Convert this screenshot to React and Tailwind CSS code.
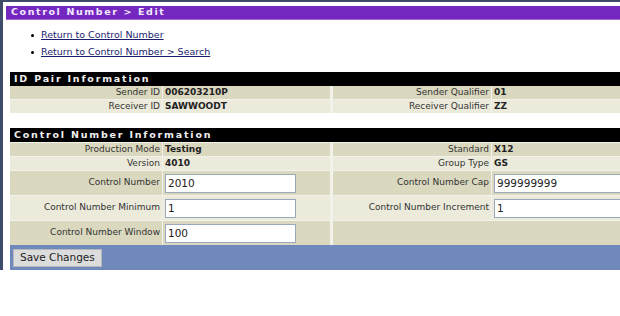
import React from "react";

const font = { fontFamily: '"DejaVu Sans", Verdana, sans-serif' };

function Row({ h, children }) {
  return <div className={`flex gap-[1px] ${h}`}>{children}</div>;
}

function Label({ dark, w, children }) {
  return (
    <div className={`${w} shrink-0 flex items-center justify-end pr-[2px] text-[9px] text-[#333] ${dark ? "bg-[#dad8bf]" : "bg-[#ebeadb]"}`}>
      {children}
    </div>
  );
}

function Value({ dark, w, children }) {
  return (
    <div className={`${w} shrink-0 flex items-center pl-[2px] text-[9px] font-bold text-[#222] ${dark ? "bg-[#dad8bf]" : "bg-[#ebeadb]"}`}>
      {children}
    </div>
  );
}

function Input({ value }) {
  return (
    <input
      readOnly
      value={value}
      className="w-[131px] h-[19px] border border-[#9aa8bb] bg-white px-[2px] text-[10.5px] font-normal text-[#222] outline-none"
      style={font}
    />
  );
}

function Sep() {
  return <div className="w-[1px] shrink-0 bg-[#f3f2ea]" />;
}

export default function App() {
  return (
    <div className="w-[620px] h-[316px] overflow-hidden bg-white" style={font}>
      <div className="flex h-[270px]">
        <div className="w-[3px] bg-[#3e4b6a] shrink-0" />
        <div className="flex-1 flex flex-col">
          <div className="h-[2px] bg-[#3e4b6a]" />
          <div className="pl-[3px] pt-[4px]">
            <div className="h-[14px] bg-[#7428c0] border-b border-[#9a6ad0] flex items-center pl-[5px] text-[9.5px] font-bold tracking-[1.6px] text-[#f4e8ff]">
              Control Number &gt; Edit
            </div>
          </div>
          <ul className="pl-[28px] pt-[9px] text-[9.5px] text-[#1c1c70]">
            <li className="flex items-center h-[13px]">
              <span className="w-[3px] h-[3px] rounded-full bg-black mr-[7px]" />
              <span className="underline">Return to Control Number</span>
            </li>
            <li className="flex items-center h-[13px] mt-[4px]">
              <span className="w-[3px] h-[3px] rounded-full bg-black mr-[7px]" />
              <span className="underline">Return to Control Number &gt; Search</span>
            </li>
          </ul>
          <div className="pl-[7px] mt-[13px] w-[700px]">
            <div className="h-[14px] bg-black flex items-center pl-[4px] text-[9.5px] font-bold tracking-[1.8px] text-[#f0f0f0]">
              ID Pair Information
            </div>
            <div className="flex flex-col gap-[1px] bg-[#f3f2ea]">
              <Row h="h-[13px]">
                <Label dark w="w-[152px]">Sender ID</Label>
                <Value dark w="w-[167px]">006203210P</Value>
                <Sep />
                <Label dark w="w-[158px]">Sender Qualifier</Label>
                <Value dark w="w-[200px]">01</Value>
              </Row>
              <Row h="h-[13px]">
                <Label w="w-[152px]">Receiver ID</Label>
                <Value w="w-[167px]">SAWWOODT</Value>
                <Sep />
                <Label w="w-[158px]">Receiver Qualifier</Label>
                <Value w="w-[200px]">ZZ</Value>
              </Row>
            </div>
            <div className="h-[15px]" />
            <div className="h-[14px] bg-black flex items-center pl-[4px] text-[9.5px] font-bold tracking-[1.8px] text-[#f0f0f0]">
              Control Number Information
            </div>
            <div className="flex flex-col gap-[1px] bg-[#f3f2ea] pt-[1px]">
              <Row h="h-[13px]">
                <Label dark w="w-[152px]">Production Mode</Label>
                <Value dark w="w-[167px]">Testing</Value>
                <Sep />
                <Label dark w="w-[158px]">Standard</Label>
                <Value dark w="w-[200px]">X12</Value>
              </Row>
              <Row h="h-[13px]">
                <Label w="w-[152px]">Version</Label>
                <Value w="w-[167px]">4010</Value>
                <Sep />
                <Label w="w-[158px]">Group Type</Label>
                <Value w="w-[200px]">GS</Value>
              </Row>
              <Row h="h-[24px]">
                <Label dark w="w-[152px]">Control Number</Label>
                <Value dark w="w-[167px]"><Input value="2010" /></Value>
                <Sep />
                <Label dark w="w-[158px]">Control Number Cap</Label>
                <Value dark w="w-[200px]"><Input value="999999999" /></Value>
              </Row>
              <Row h="h-[24px]">
                <Label w="w-[152px]">Control Number Minimum</Label>
                <Value w="w-[167px]"><Input value="1" /></Value>
                <Sep />
                <Label w="w-[158px]">Control Number Increment</Label>
                <Value w="w-[200px]"><Input value="1" /></Value>
              </Row>
              <Row h="h-[24px]">
                <Label dark w="w-[152px]">Control Number Window</Label>
                <Value dark w="w-[167px]"><Input value="100" /></Value>
                <Sep />
                <Value dark w="w-[359px]"></Value>
              </Row>
            </div>
            <div className="h-[25px] bg-[#7089bd] flex items-center pl-[3px]">
              <button
                className="h-[18px] px-[6px] bg-[#dcdcdc] border border-[#b8b8b8] text-[10.5px] text-[#222]"
                style={font}
              >
                Save Changes
              </button>
            </div>
          </div>
        </div>
      </div>
    </div>
  );
}
